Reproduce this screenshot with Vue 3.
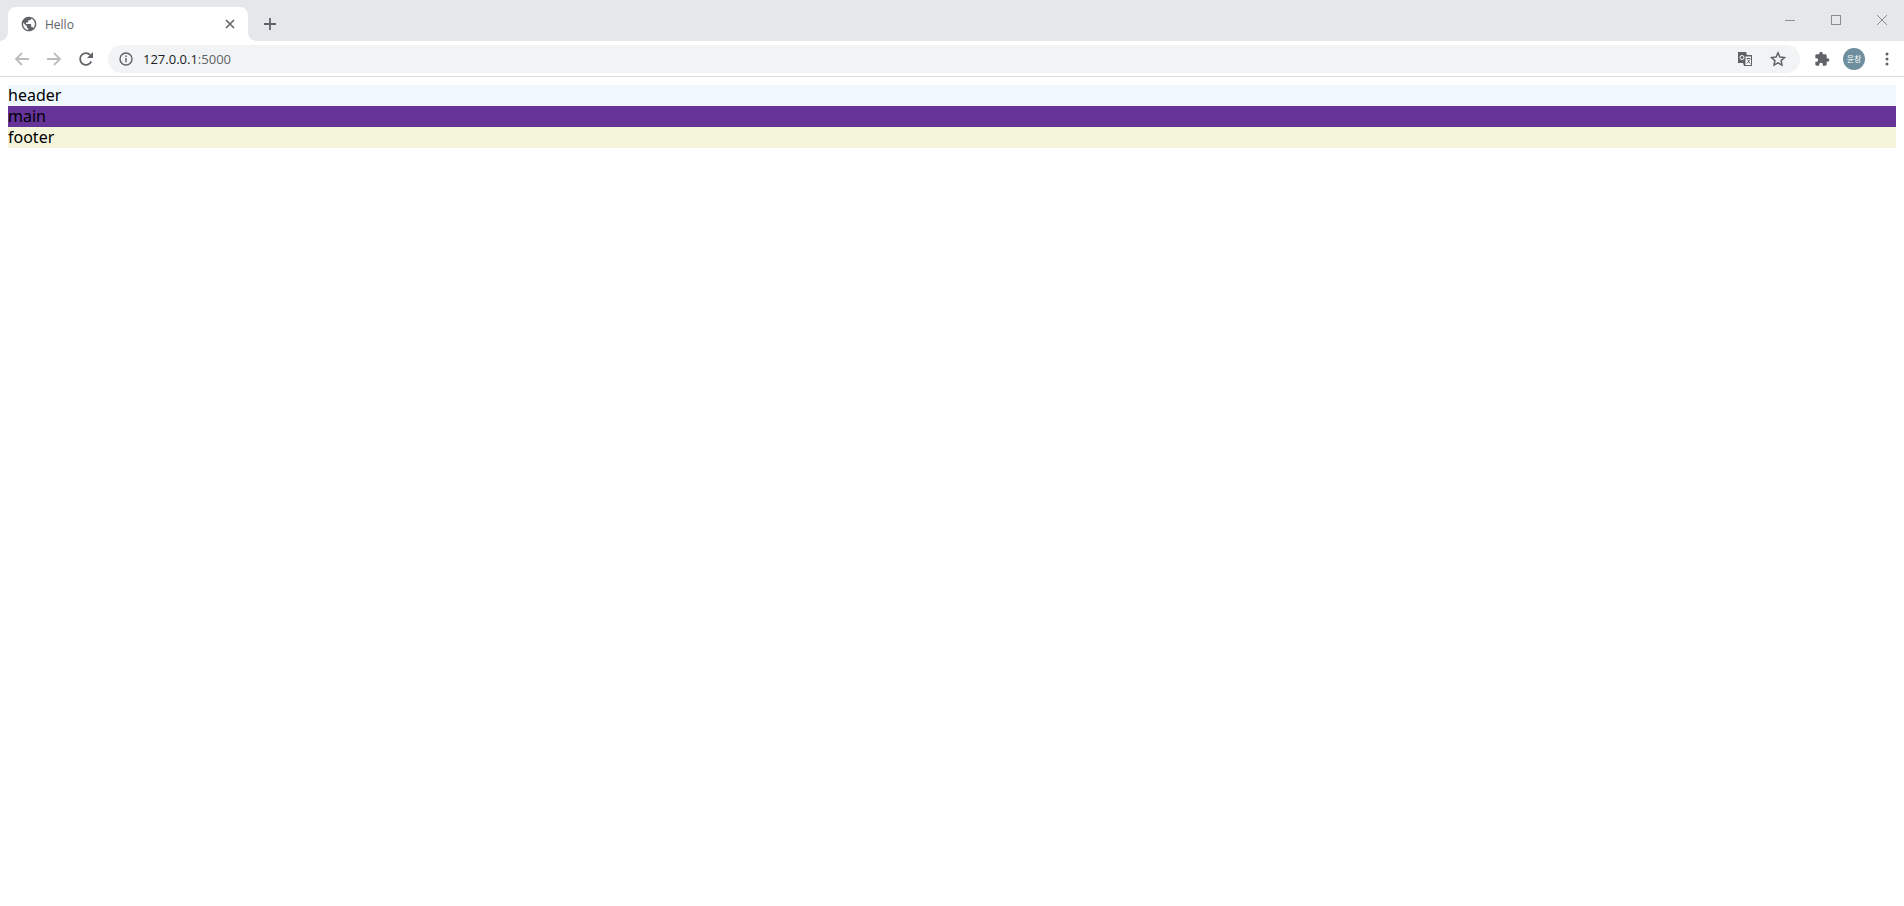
<script setup>
const rows = [
  { name: "header", cls: "row-header" },
  { name: "main", cls: "row-main" },
  { name: "footer", cls: "row-footer" },
];
</script>

<template>
  <div class="browser">
    <div class="tabstrip">
      <div class="tab">
        <svg class="favicon" width="16" height="16" viewBox="0 0 24 24">
          <path fill="#5f6368" d="M12 1C5.9 1 1 5.9 1 12s4.9 11 11 11 11-4.9 11-11S18.100 1 12 1zm-1.100 19.800C6.600 20.300 3.200 16.500 3.200 12c0-.7.100-1.300.2-2l5.300 5.300v1.100c0 1.200 1 2.200 2.200 2.200v2.200zm7.600-2.800c-.3-.9-1.100-1.500-2.100-1.500h-1.100v-3.300c0-.6-.5-1.100-1.100-1.100H7.600V9.800h2.200c.6 0 1.100-.5 1.100-1.100V6.500h2.200c1.200 0 2.200-1 2.200-2.200v-.5c3.200 1.300 5.500 4.500 5.500 8.200 0 2.300-.9 4.400-2.300 6z" />
        </svg>
        <span class="tab-title">Hello</span>
        <svg class="tab-close" width="10" height="10" viewBox="0 0 10 10">
          <path d="M1 1l8 8M9 1l-8 8" stroke="#5f6368" stroke-width="1.600" fill="none" />
        </svg>
      </div>
      <svg class="new-tab" width="14" height="14" viewBox="0 0 14 14">
        <path d="M7 1v12M1 7h12" stroke="#5f6368" stroke-width="1.800" fill="none" />
      </svg>
      <div class="window-controls">
        <svg width="46" height="14" viewBox="0 0 46 14">
          <path d="M18 7.500h10" stroke="#8a8d91" fill="none" />
        </svg>
        <svg width="46" height="14" viewBox="0 0 46 14">
          <rect x="18.500" y="2.500" width="9" height="9" stroke="#8a8d91" fill="none" />
        </svg>
        <svg width="46" height="14" viewBox="0 0 46 14">
          <path d="M18 2l10 10M28 2L18 12" stroke="#8a8d91" fill="none" />
        </svg>
      </div>
    </div>

    <div class="toolbar">
      <svg class="nav-icon" width="16" height="16" viewBox="0 0 16 16">
        <path d="M15 8H2M8 2L2 8l6 6" stroke="#babcbe" stroke-width="1.800" fill="none" />
      </svg>
      <svg class="nav-icon" width="16" height="16" viewBox="0 0 16 16">
        <path d="M1 8h13M8 2l6 6-6 6" stroke="#babcbe" stroke-width="1.800" fill="none" />
      </svg>
      <svg class="nav-icon" width="16" height="16" viewBox="0 0 16 16">
        <path d="M13.300 10.500A5.900 5.900 0 1 1 12.200 3.800" stroke="#5f6368" stroke-width="1.800" fill="none" />
        <path d="M15 1v6H9z" fill="#5f6368" />
      </svg>

      <div class="omnibox">
        <svg class="info" width="14" height="14" viewBox="0 0 14 14">
          <circle cx="7" cy="7" r="6" stroke="#5f6368" stroke-width="1.400" fill="none" />
          <path d="M7 6v4.200M7 3.400v1.500" stroke="#5f6368" stroke-width="1.400" fill="none" />
        </svg>
        <span class="url">127.0.0.1<span class="port">:5000</span></span>
        <svg class="translate" width="16" height="16" viewBox="0 0 16 16">
          <path d="M1 1h8l1 3h5v11H7l-1-3H1z" fill="#5f6368" />
          <path d="M8 5h6.500v9.500H8z" fill="#fff" stroke="#5f6368" />
          <circle cx="5" cy="6.500" r="2" stroke="#fff" fill="none" />
          <path d="M9.500 7.500h4M10 12.500l3-4M10.500 8.500l2.500 4" stroke="#5f6368" fill="none" />
        </svg>
        <svg class="star" width="16" height="16" viewBox="0 0 16 16">
          <path d="M8 1.800l1.900 4.200 4.600.5-3.400 3.100.9 4.500L8 11.800l-4 2.300.9-4.500L1.500 6.500l4.600-.5z" stroke="#5f6368" stroke-width="1.500" fill="none" stroke-linejoin="miter" />
        </svg>
      </div>

      <svg class="puzzle" width="16" height="16" viewBox="0 0 24 24">
        <path fill="#5f6368" d="M20.500 11H19V7c0-1.100-.9-2-2-2h-4V3.500C13 2.100 11.900 1 10.500 1S8 2.100 8 3.500V5H4c-1.100 0-2 .9-2 2v3.800h1.500c1.500 0 2.700 1.200 2.700 2.700S5 16.200 3.500 16.200H2V20c0 1.100.9 2 2 2h3.800v-1.500c0-1.500 1.200-2.700 2.700-2.700s2.700 1.200 2.700 2.700V22H17c1.100 0 2-.9 2-2v-4h1.500c1.400 0 2.500-1.100 2.500-2.500S21.900 11 20.500 11z" />
      </svg>
      <div class="avatar">윤창</div>
      <svg class="menu" width="4" height="14" viewBox="0 0 4 14">
        <circle cx="2" cy="2" r="1.500" fill="#5f6368" />
        <circle cx="2" cy="7" r="1.500" fill="#5f6368" />
        <circle cx="2" cy="12" r="1.500" fill="#5f6368" />
      </svg>
    </div>

    <div class="page">
      <div v-for="row in rows" :key="row.name" class="row" :class="row.cls">{{ row.name }}</div>
    </div>
  </div>
</template>

<style>
html,
body {
  background: #fff;
}
</style>

<style scoped>
.browser {
  min-height: 906px;
  display: flex;
  flex-direction: column;
  font-family: "Noto Sans", "Noto Sans CJK KR", sans-serif;
  overflow: hidden;
}

.tabstrip {
  height: 41px;
  box-sizing: border-box;
  padding: 7px 0 0 8px;
  display: flex;
  align-items: flex-start;
  background: #e5e8eb;
}

.tab {
  position: relative;
  width: 240px;
  height: 34px;
  box-sizing: border-box;
  padding: 0 13px;
  display: flex;
  align-items: center;
  background: #fff;
  border-radius: 8px 8px 0 0;
}

.tab::before,
.tab::after {
  content: "";
  position: absolute;
  bottom: 0;
  width: 8px;
  height: 8px;
}

.tab::before {
  left: -8px;
  background: radial-gradient(circle at 0 0, #e5e8eb 7.5px, #fff 8px);
}

.tab::after {
  right: -8px;
  background: radial-gradient(circle at 100% 0, #e5e8eb 7.5px, #fff 8px);
}

.favicon {
  flex: none;
}

.tab-title {
  margin-left: 8px;
  font-family: "Open Sans", sans-serif;
  font-size: 12px;
  color: #5f6368;
}

.tab-close {
  margin-left: auto;
}

.new-tab {
  margin: 10px 0 0 15px;
}

.window-controls {
  margin-left: auto;
  display: flex;
  padding-top: 6px;
  margin-right: -1px;
}

.toolbar {
  height: 36px;
  box-sizing: border-box;
  padding: 0 14px 0 14px;
  display: flex;
  align-items: center;
  background: #fff;
  border-bottom: 1px solid #dadce0;
}

.nav-icon {
  margin-right: 16px;
  flex: none;
}

.omnibox {
  width: 1692px;
  height: 28px;
  box-sizing: border-box;
  margin-left: -2px;
  padding: 0 14px 0 11px;
  display: flex;
  align-items: center;
  flex: none;
  background: #f1f3f4;
  border-radius: 14px;
}

.url {
  margin-left: 10px;
  font-family: "Open Sans", sans-serif;
  font-size: 13px;
  color: #202124;
}

.port {
  color: #5f6368;
}

.translate {
  margin-left: auto;
}

.star {
  margin-left: 17px;
}

.puzzle {
  margin-left: 14px;
  flex: none;
}

.avatar {
  width: 22px;
  height: 22px;
  margin-left: 13px;
  flex: none;
  display: flex;
  align-items: center;
  justify-content: center;
  border-radius: 50%;
  background: #6e8e9d;
  color: #fff;
  font-size: 8px;
}

.menu {
  margin-left: 20px;
  flex: none;
}

.page {
  padding: 8px;
}

.row {
  height: 21px;
  font-size: 16px;
  line-height: 21px;
  color: #000;
}

.row-header {
  background: #f0f8ff;
}

.row-main {
  background: #663399;
}

.row-footer {
  background: #f5f5dc;
}
</style>
